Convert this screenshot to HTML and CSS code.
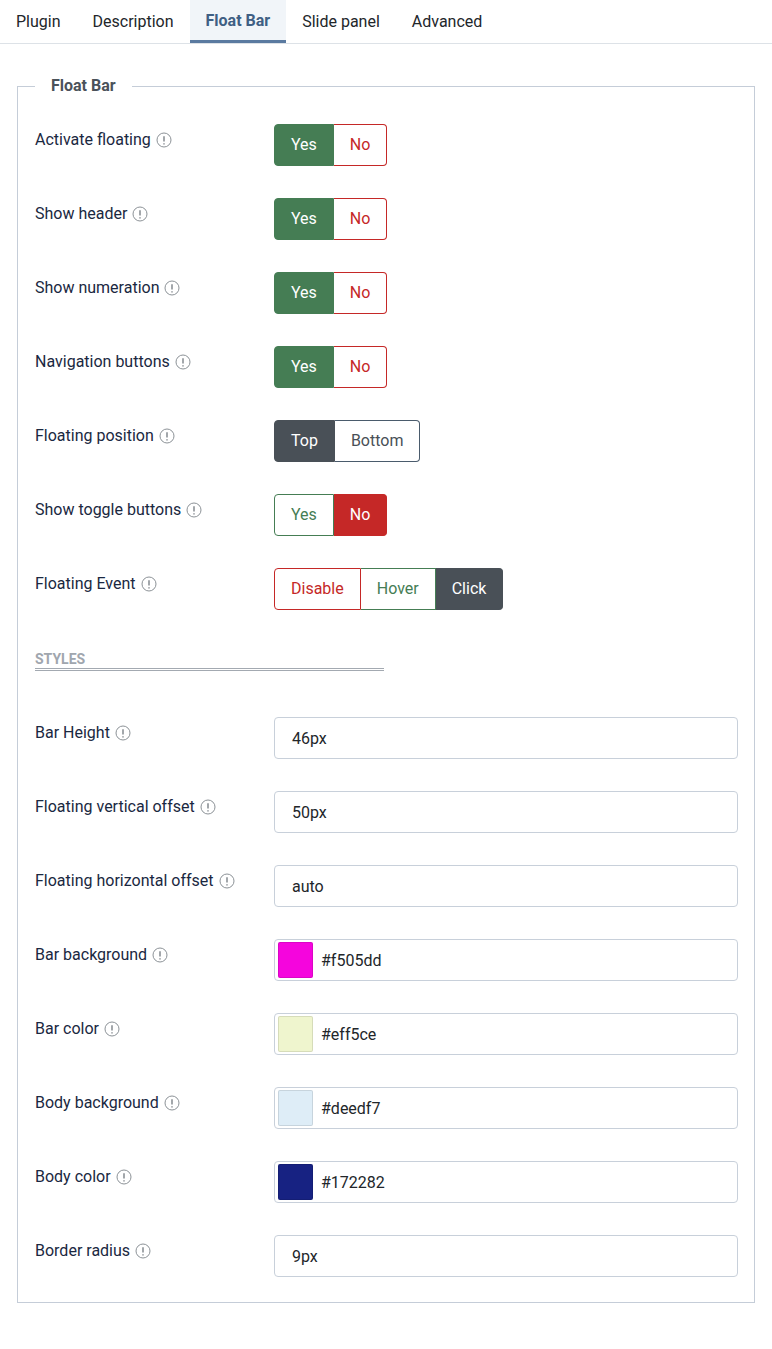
FILE: index.html
```html
<!DOCTYPE html>
<html lang="en">
<head>
  <meta charset="UTF-8">
  <meta name="viewport" content="width=device-width, initial-scale=1.0">
  <title>Float Bar options</title>
  <link rel="stylesheet" href="styles.css">
</head>
<body>

  <nav class="tabs">
    <a class="tab">Plugin</a>
    <a class="tab">Description</a>
    <a class="tab active">Float Bar</a>
    <a class="tab">Slide panel</a>
    <a class="tab">Advanced</a>
  </nav>

  <fieldset class="options">
    <legend>Float Bar</legend>

    <div class="row">
      <label>Activate floating <span class="info"><svg viewBox="0 0 16 16"><circle cx="8" cy="8" r="7"/><path d="M8 4.2v5.2M8 11.2v1.2"/></svg></span></label>
      <div class="switch">
        <span class="opt yes on">Yes</span><span class="opt no">No</span>
      </div>
    </div>

    <div class="row">
      <label>Show header <span class="info"><svg viewBox="0 0 16 16"><circle cx="8" cy="8" r="7"/><path d="M8 4.2v5.2M8 11.2v1.2"/></svg></span></label>
      <div class="switch">
        <span class="opt yes on">Yes</span><span class="opt no">No</span>
      </div>
    </div>

    <div class="row">
      <label>Show numeration <span class="info"><svg viewBox="0 0 16 16"><circle cx="8" cy="8" r="7"/><path d="M8 4.2v5.2M8 11.2v1.2"/></svg></span></label>
      <div class="switch">
        <span class="opt yes on">Yes</span><span class="opt no">No</span>
      </div>
    </div>

    <div class="row">
      <label>Navigation buttons <span class="info"><svg viewBox="0 0 16 16"><circle cx="8" cy="8" r="7"/><path d="M8 4.2v5.2M8 11.2v1.2"/></svg></span></label>
      <div class="switch">
        <span class="opt yes on">Yes</span><span class="opt no">No</span>
      </div>
    </div>

    <div class="row">
      <label>Floating position <span class="info"><svg viewBox="0 0 16 16"><circle cx="8" cy="8" r="7"/><path d="M8 4.2v5.2M8 11.2v1.2"/></svg></span></label>
      <div class="switch">
        <span class="opt dark on">Top</span><span class="opt dark">Bottom</span>
      </div>
    </div>

    <div class="row">
      <label>Show toggle buttons <span class="info"><svg viewBox="0 0 16 16"><circle cx="8" cy="8" r="7"/><path d="M8 4.2v5.2M8 11.2v1.2"/></svg></span></label>
      <div class="switch">
        <span class="opt yes">Yes</span><span class="opt no on">No</span>
      </div>
    </div>

    <div class="row">
      <label>Floating Event <span class="info"><svg viewBox="0 0 16 16"><circle cx="8" cy="8" r="7"/><path d="M8 4.2v5.2M8 11.2v1.2"/></svg></span></label>
      <div class="switch">
        <span class="opt no">Disable</span><span class="opt yes">Hover</span><span class="opt dark on">Click</span>
      </div>
    </div>

    <h3 class="section">Styles</h3>

    <div class="row">
      <label>Bar Height <span class="info"><svg viewBox="0 0 16 16"><circle cx="8" cy="8" r="7"/><path d="M8 4.2v5.2M8 11.2v1.2"/></svg></span></label>
      <div class="field">46px</div>
    </div>

    <div class="row">
      <label>Floating vertical offset <span class="info"><svg viewBox="0 0 16 16"><circle cx="8" cy="8" r="7"/><path d="M8 4.2v5.2M8 11.2v1.2"/></svg></span></label>
      <div class="field">50px</div>
    </div>

    <div class="row">
      <label>Floating horizontal offset <span class="info"><svg viewBox="0 0 16 16"><circle cx="8" cy="8" r="7"/><path d="M8 4.2v5.2M8 11.2v1.2"/></svg></span></label>
      <div class="field">auto</div>
    </div>

    <div class="row">
      <label>Bar background <span class="info"><svg viewBox="0 0 16 16"><circle cx="8" cy="8" r="7"/><path d="M8 4.2v5.2M8 11.2v1.2"/></svg></span></label>
      <div class="field color"><span class="swatch" style="background:#f505dd"></span>#f505dd</div>
    </div>

    <div class="row">
      <label>Bar color <span class="info"><svg viewBox="0 0 16 16"><circle cx="8" cy="8" r="7"/><path d="M8 4.2v5.2M8 11.2v1.2"/></svg></span></label>
      <div class="field color"><span class="swatch" style="background:#eff5ce"></span>#eff5ce</div>
    </div>

    <div class="row">
      <label>Body background <span class="info"><svg viewBox="0 0 16 16"><circle cx="8" cy="8" r="7"/><path d="M8 4.2v5.2M8 11.2v1.2"/></svg></span></label>
      <div class="field color"><span class="swatch" style="background:#deedf7"></span>#deedf7</div>
    </div>

    <div class="row">
      <label>Body color <span class="info"><svg viewBox="0 0 16 16"><circle cx="8" cy="8" r="7"/><path d="M8 4.2v5.2M8 11.2v1.2"/></svg></span></label>
      <div class="field color"><span class="swatch" style="background:#172282"></span>#172282</div>
    </div>

    <div class="row">
      <label>Border radius <span class="info"><svg viewBox="0 0 16 16"><circle cx="8" cy="8" r="7"/><path d="M8 4.2v5.2M8 11.2v1.2"/></svg></span></label>
      <div class="field">9px</div>
    </div>
  </fieldset>

</body>
</html>
```

FILE: styles.css
```css
body {
  margin: 0;
  font-family: Roboto, "Liberation Sans", sans-serif;
  color: #22262a;
  background: #fff;
}
.tabs {
  display: flex;
  border-bottom: 1px solid #dde2e7;
}
.tab {
  padding: 0 16px;
  height: 43px;
  line-height: 43px;
  font-size: 16px;
  color: #22262a;
  box-sizing: border-box;
  cursor: pointer;
}
.tab.active {
  background: #f1f5f9;
  color: #3f5f84;
  font-weight: 700;
  border-bottom: 3px solid #5a7aa0;
  line-height: 41px;
}
.options {
  margin: 30px 17px 46px;
  padding: 26px 16px 25px 17px;
  border: 1px solid #c5cdd8;
}
.options legend {
  margin: 0;
  padding: 0 16px;
  font-size: 16px;
  font-weight: 700;
  color: #4b525a;
  line-height: 24px;
}
.row {
  display: grid;
  grid-template-columns: 239px 1fr;
  align-items: start;
  margin-bottom: 32px;
}
.row:last-child {
  margin-bottom: 0;
}
.row label {
  padding-top: 4px;
  font-size: 16px;
  line-height: 24px;
  color: #1a2841;
}
.info {
  display: inline-block;
  width: 16px;
  height: 16px;
  margin-left: 1px;
  vertical-align: -3px;
}
.info svg {
  width: 16px;
  height: 16px;
  fill: none;
  stroke: #8c9297;
  stroke-width: 1;
}
.info svg path {
  stroke-width: 1.6;
}
.switch {
  display: flex;
}
.opt {
  height: 42px;
  line-height: 40px;
  padding: 0 16px;
  font-size: 16px;
  border: 1px solid;
  box-sizing: border-box;
  background: #fff;
}
.opt:first-child {
  border-radius: 4px 0 0 4px;
}
.opt:last-child {
  border-radius: 0 4px 4px 0;
}
.opt + .opt {
  border-left: 0;
}
.opt.yes {
  color: #457d54;
  border-color: #457d54;
}
.opt.no {
  color: #c52827;
  border-color: #c52827;
}
.opt.dark {
  color: #495057;
  border-color: #4a5b6c;
}
.opt.yes.on {
  background: #457d54;
  color: #fff;
}
.opt.no.on {
  background: #c52827;
  color: #fff;
}
.opt.dark.on {
  background: #495057;
  border-color: #495057;
  color: #fff;
}
.section {
  width: 349px;
  margin: 0 0 46px;
  padding-top: 8px;
  font-size: 14px;
  line-height: 18px;
  font-weight: 700;
  text-transform: uppercase;
  color: #a0a6ae;
  border-bottom: 3px double #a3a9b1;
}
.field {
  display: flex;
  align-items: center;
  height: 42px;
  padding: 0 17px;
  border: 1px solid #c8d0da;
  border-radius: 4px;
  font-size: 16px;
  color: #22262a;
  box-sizing: border-box;
}
.field.color {
  padding-left: 3px;
}
.swatch {
  width: 35px;
  height: 36px;
  margin-right: 8px;
  border-radius: 2px;
  box-shadow: inset 0 0 0 1px rgba(0, 0, 0, 0.1);
}
```
